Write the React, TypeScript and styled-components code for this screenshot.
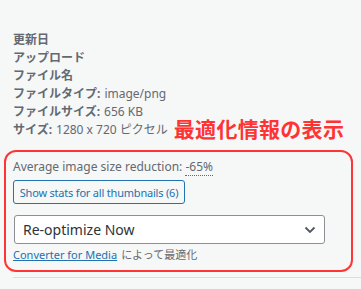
import styled, { createGlobalStyle } from "styled-components";

const Global = createGlobalStyle`
  html, body {
    margin: 0;
    padding: 0;
    background: #f6f7f7;
  }
  body {
    font-family: "Noto Sans", "Noto Sans CJK JP", sans-serif;
    color: #646970;
  }
`;

const Page = styled.div`
  width: 361px;
  height: 289px;
  padding-top: 31px;
  box-sizing: border-box;
  overflow: hidden;
`;

const Details = styled.div`
  padding-left: 13px;
  display: flex;
  flex-direction: column;
`;

const Row = styled.div`
  display: flex;
  align-items: center;
  height: 18px;
  font-size: 12px;
  line-height: 18px;
  white-space: nowrap;
`;

const Label = styled.span`
  font-weight: 700;
  margin-right: 4px;
`;

const Note = styled.span`
  margin-left: 6px;
  margin-top: -4px;
  color: #ff3333;
  font-size: 21px;
  font-weight: 700;
  font-family: "Noto Sans CJK JP", sans-serif;
  letter-spacing: 0.3px;
`;

const Highlight = styled.div`
  margin: 11px 0 0 4px;
  width: 349px;
  height: 122px;
  box-sizing: border-box;
  border: 2px solid #ff3535;
  border-radius: 12px;
  padding: 6px 0 0 7px;
  display: flex;
  flex-direction: column;
  align-items: flex-start;
`;

const Reduction = styled.div`
  font-size: 12px;
  line-height: 18px;
`;

const Dotted = styled.span`
  border-bottom: 1px dotted #646970;
`;

const StatsButton = styled.button`
  margin-top: 4px;
  height: 24px;
  width: 172px;
  padding: 0;
  box-sizing: border-box;
  background: #f6f7f7;
  border: 1px solid #2271b1;
  border-radius: 3px;
  color: #2271b1;
  font-family: "Noto Sans", sans-serif;
  font-size: 11px;
  white-space: nowrap;
  letter-spacing: -0.2px;
`;

const Select = styled.div`
  margin-top: 11px;
  margin-left: 1px;
  width: 311px;
  height: 29px;
  box-sizing: border-box;
  border: 1px solid #8c8f94;
  border-radius: 3px;
  background: #fff;
  display: flex;
  align-items: center;
  justify-content: space-between;
  padding: 0 8px 0 8px;
  color: #2c3338;
  font-size: 14px;
`;

const Footer = styled.div`
  margin-top: 3px;
  font-size: 11px;
  line-height: 16px;
  font-family: "Noto Sans", "Noto Sans CJK JP", sans-serif;
`;

const Link = styled.a`
  color: #2271b1;
  text-decoration: underline;
  margin-right: 4px;
`;

const Divider = styled.hr`
  margin: 5px 0 0 13px;
  border: none;
  border-top: 1px solid #dcdcde;
`;

const rows: [string, string][] = [
  ["更新日", ""],
  ["アップロード", ""],
  ["ファイル名", ""],
  ["ファイルタイプ:", "image/png"],
  ["ファイルサイズ:", "656 KB"],
];

export default function App() {
  return (
    <>
      <Global />
      <Page>
        <Details>
          {rows.map(([l, v]) => (
            <Row key={l}>
              <Label>{l}</Label>
              {v}
            </Row>
          ))}
          <Row>
            <Label>サイズ:</Label>
            1280 x 720 ピクセル
            <Note>最適化情報の表示</Note>
          </Row>
        </Details>
        <Highlight>
          <Reduction>
            Average image size reduction: <Dotted>-65%</Dotted>
          </Reduction>
          <StatsButton>Show stats for all thumbnails (6)</StatsButton>
          <Select>
            <span>Re-optimize Now</span>
            <svg width="12" height="8" viewBox="0 0 12 8">
              <path d="M1.5 1.5 L6 6 L10.5 1.5" fill="none" stroke="#50575e" strokeWidth="1.8" />
            </svg>
          </Select>
          <Footer>
            <Link href="#">Converter for Media</Link>によって最適化
          </Footer>
        </Highlight>
        <Divider />
      </Page>
    </>
  );
}
